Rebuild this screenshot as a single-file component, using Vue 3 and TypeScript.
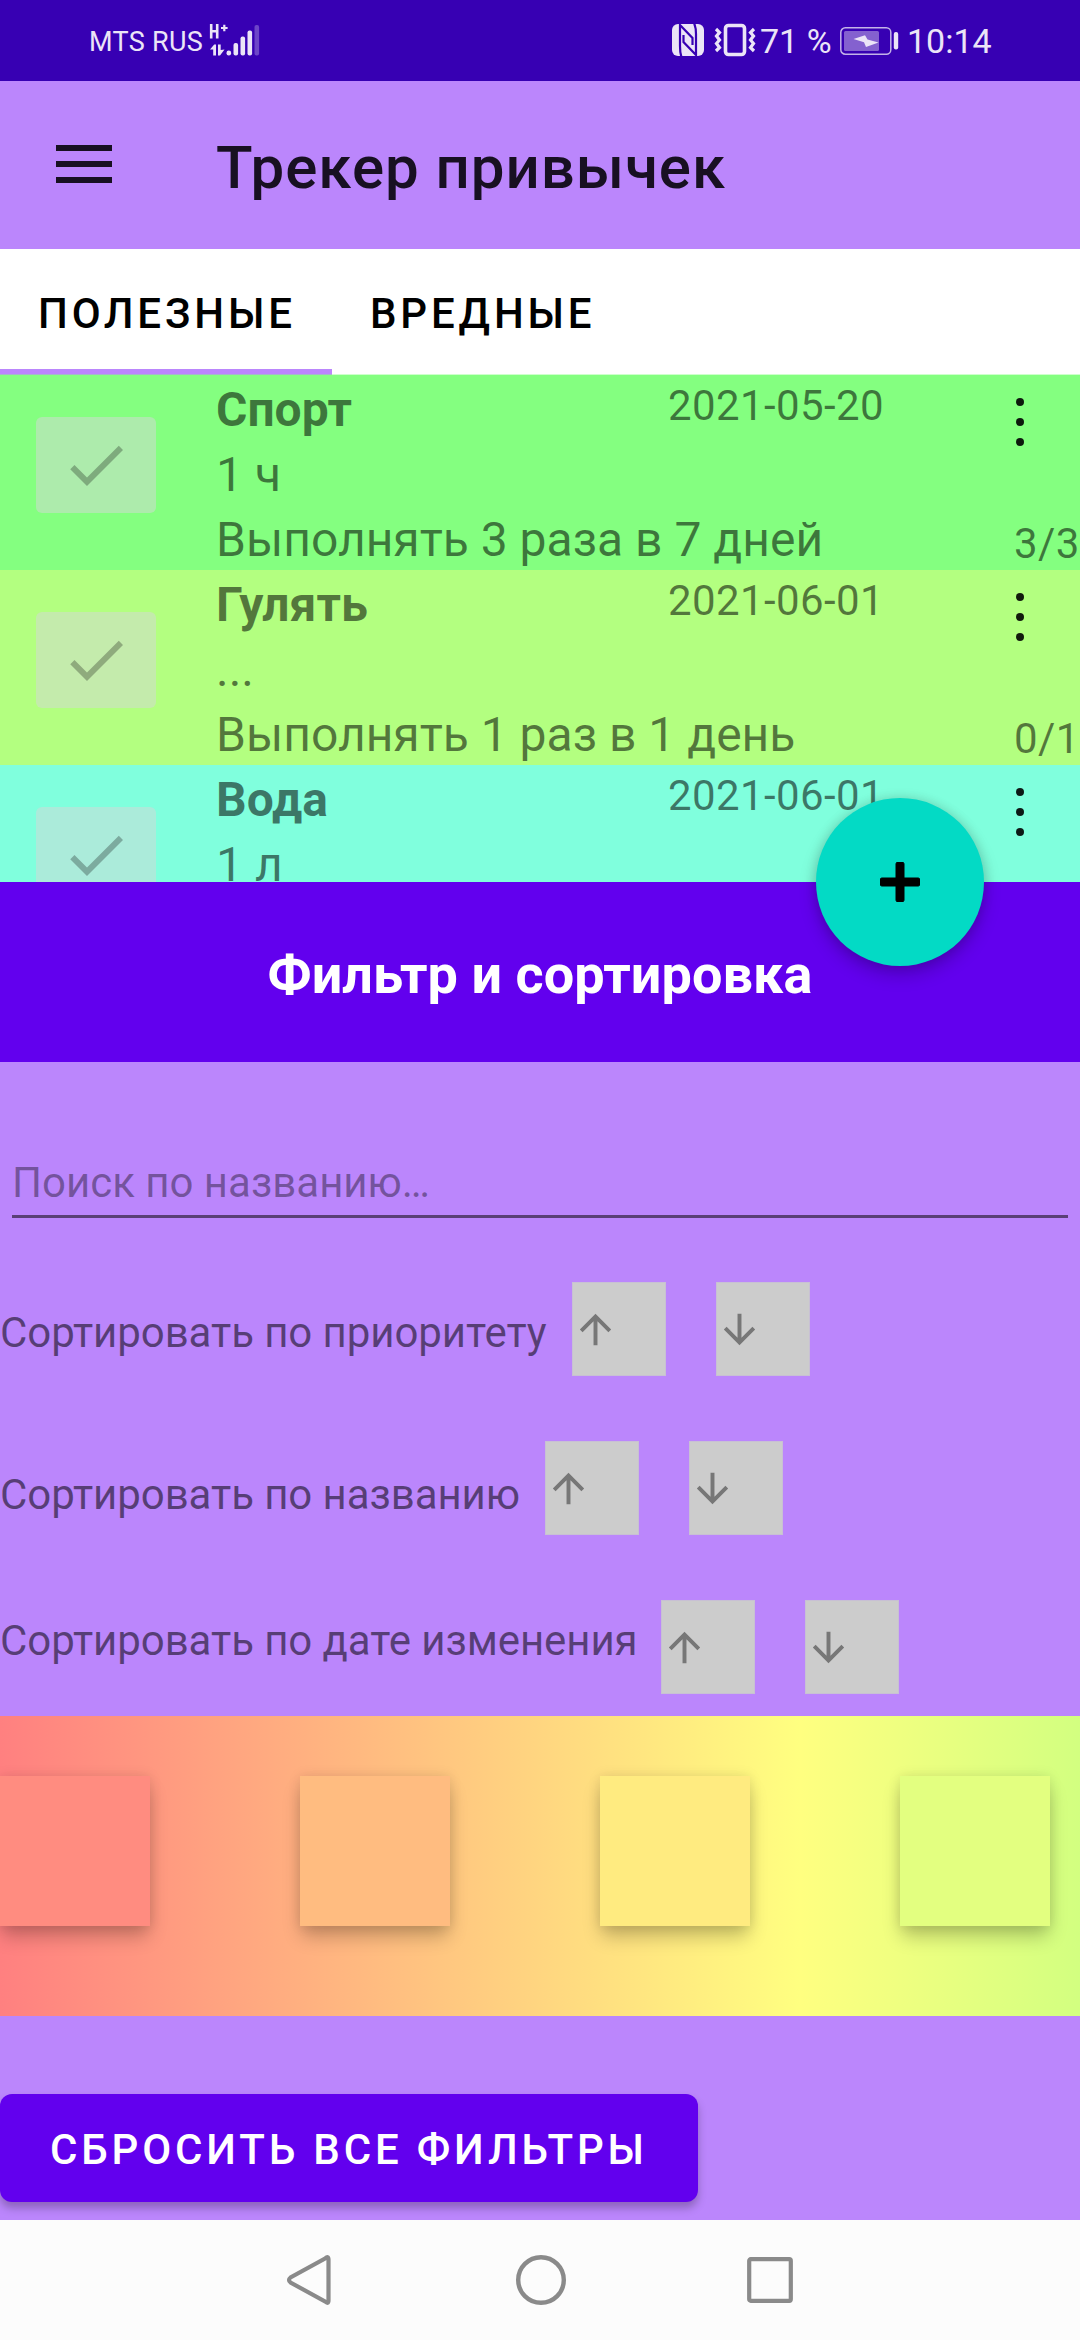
<script setup lang="ts">
interface Habit {
  name: string
  amount: string
  schedule?: string
  date: string
  progress?: string
  color: string
}

interface SortOption {
  label: string
  width: number
  padTop: number
  padBottom: number
}

const habits: Habit[] = [
  { name: 'Спорт', amount: '1 ч', schedule: 'Выполнять 3 раза в 7 дней', date: '2021-05-20', progress: '3/3', color: '#84ff80' },
  { name: 'Гулять', amount: '...', schedule: 'Выполнять 1 раз в 1 день', date: '2021-06-01', progress: '0/1', color: '#b3ff80' },
  { name: 'Вода', amount: '1 л', date: '2021-06-01', color: '#80ffdd' },
]

const sortOptions: SortOption[] = [
  { label: 'Сортировать по приоритету', width: 547, padTop: 8, padBottom: 0 },
  { label: 'Сортировать по названию', width: 520, padTop: 13, padBottom: 0 },
  { label: 'Сортировать по дате изменения', width: 636, padTop: 0, padBottom: 12 },
]

const swatches: string[] = ['#ff8c80', '#ffbc80', '#ffeb80', '#e3ff80']
</script>

<template>
  <div class="screen">
    <header class="status">
      <span class="carrier">MTS RUS</span>
      <svg class="signal" width="52" height="34" viewBox="0 0 52 34">
        <g fill="none" stroke="#ebe4f7" stroke-width="2.6">
          <path d="M2.2 1V15.500M8.200 1V15.500M2.200 8.300H8.200" />
          <path d="M12 5H18.600M15.300 1.800V8.200" stroke-width="2.200" />
        </g>
        <path d="M1 26.500L5.200 21.500H7V32.500H4.200V26.500ZM9 21.500H11.700V27L15.500 26.500L11 32.500H9Z" fill="#ebe4f7" />
        <g fill="#ebe4f7">
          <rect x="17.500" y="27.500" width="4.600" height="5" rx="2.200" />
          <rect x="24.500" y="20" width="4.600" height="12.500" rx="2" />
          <rect x="31.500" y="13.500" width="4.600" height="19" rx="2" />
          <rect x="38.500" y="7.500" width="4.600" height="25" rx="2" />
          <rect x="45.500" y="2" width="4.600" height="30.500" rx="2" opacity=".3" />
        </g>
      </svg>
      <span class="spacer"></span>
      <svg class="nfc" width="32" height="32" viewBox="0 0 32 32">
        <rect width="32" height="32" rx="6" fill="#ebe4f7" />
        <g fill="none" stroke="#3700b3" stroke-width="2.200">
          <path d="M9.500 33C8 29 8 26 8 22V1L20.500 14V21" />
          <path d="M22 -1C23.800 3 24 6 24 10V31L11.500 18V11" />
        </g>
      </svg>
      <svg class="vibrate" width="42" height="34" viewBox="0 0 42 34">
        <rect x="11.500" y="2.500" width="19" height="29" rx="3" fill="none" stroke="#ebe4f7" stroke-width="3.600" />
        <path d="M2 6L5.500 9.500L2.500 13L5.500 17L2.500 20.500L5.500 24.500L2 28M40 6L36.500 9.500L39.500 13L36.500 17L39.500 20.500L36.500 24.500L40 28" fill="none" stroke="#ebe4f7" stroke-width="3.200" />
      </svg>
      <span class="percent">71 %</span>
      <svg class="battery" width="60" height="28" viewBox="0 0 60 28">
        <rect x=".800" y=".800" width="50" height="26.400" rx="4.500" fill="none" stroke="#c3b2e8" stroke-width="1.500" />
        <rect x="4" y="4" width="35" height="20" rx="1.500" fill="#8461cf" />
        <path d="M13.500 12L25 8.200L27.500 12.600L38.500 15.500L26 20L24 15.300Z" fill="#ebe4f7" />
        <rect x="53.800" y="5" width="4.400" height="17.500" rx="2" fill="#ebe4f7" />
      </svg>
      <span class="clock">10:14</span>
    </header>

    <div class="appbar">
      <svg class="burger" width="56" height="38" viewBox="0 0 56 38">
        <path d="M0 0H56V6H0ZM0 16H56V22H0ZM0 32H56V38H0Z" fill="#181022" />
      </svg>
      <h1 class="title">Трекер привычек</h1>
    </div>

    <nav class="tabs">
      <span class="tab active">ПОЛЕЗНЫЕ</span>
      <span class="tab">ВРЕДНЫЕ</span>
    </nav>

    <main class="list">
      <article v-for="habit in habits" :key="habit.name" class="habit" :style="{ backgroundColor: habit.color }">
        <div class="check">
          <svg width="72" height="72" viewBox="0 0 24 24">
            <path d="M9 16.170L4.830 12l-1.420 1.410L9 19 21 7l-1.410-1.410z" fill="#000" fill-opacity=".27" />
          </svg>
        </div>
        <strong class="name">{{ habit.name }}</strong>
        <span class="date">{{ habit.date }}</span>
        <svg class="more" width="10" height="50" viewBox="0 0 10 50">
          <g fill="#000" fill-opacity=".9">
            <circle cx="5" cy="5" r="4" />
            <circle cx="5" cy="25" r="4" />
            <circle cx="5" cy="45" r="4" />
          </g>
        </svg>
        <span class="amount">{{ habit.amount }}</span>
        <span v-if="habit.schedule" class="schedule">{{ habit.schedule }}</span>
        <span v-if="habit.progress" class="progress">{{ habit.progress }}</span>
      </article>
    </main>

    <section class="sheet">
      <h2 class="sheet-title">Фильтр и сортировка</h2>
      <button class="fab" type="button">
        <svg width="40" height="40" viewBox="0 0 40 40">
          <path d="M20 1.200V38.800M1.200 20H38.800" stroke="#000" stroke-width="9" />
          <path d="M17 1H23M17 39H23M1 17V23M39 17V23" stroke="#000" stroke-width="2" stroke-linecap="round" />
        </svg>
      </button>

      <div class="search">Поиск по названию…</div>

      <div class="sorts">
        <div v-for="option in sortOptions" :key="option.label" class="sort">
          <span
            class="sort-label"
            :style="{ width: option.width + 'px', paddingTop: option.padTop + 'px', paddingBottom: option.padBottom + 'px' }"
          >{{ option.label }}</span>
          <div class="sort-button">
            <svg width="47" height="47" viewBox="0 0 24 24">
              <path d="M4 12l1.410 1.410L11 7.830V20h2V7.830l5.580 5.590L20 12l-8-8-8 8z" fill="#777" />
            </svg>
          </div>
          <div class="sort-button">
            <svg width="47" height="47" viewBox="0 0 24 24">
              <path d="M20 12l-1.410-1.410L13 16.170V4h-2v12.170l-5.580-5.590L4 12l8 8 8-8z" fill="#777" />
            </svg>
          </div>
        </div>
      </div>

      <div class="palette">
        <div v-for="color in swatches" :key="color" class="swatch" :style="{ backgroundColor: color }"></div>
      </div>

      <button class="reset" type="button">СБРОСИТЬ ВСЕ ФИЛЬТРЫ</button>
    </section>

    <footer class="navbar">
      <svg width="50" height="54" viewBox="0 0 50 54">
        <path d="M43.500 6.500V47.500Q43.500 51.500 40 48.500L5.500 29.500Q2.500 27 5.500 24.500L40 5.500Q43.500 2.500 43.500 6.500Z" fill="none" stroke="#8a8a8a" stroke-width="4.200" />
      </svg>
      <svg width="54" height="54" viewBox="0 0 54 54">
        <circle cx="27" cy="27" r="22.800" fill="none" stroke="#8a8a8a" stroke-width="4.400" />
      </svg>
      <svg class="recent" width="50" height="54" viewBox="0 0 50 54">
        <rect x="4.200" y="6.200" width="41.600" height="41.600" rx="1.500" fill="none" stroke="#8a8a8a" stroke-width="4.200" />
      </svg>
    </footer>
  </div>
</template>

<style>
body {
  margin: 0;
}
</style>

<style scoped>
.screen {
  width: 1080px;
  height: 2340px;
  overflow: hidden;
  display: flex;
  flex-direction: column;
  font-family: Roboto, "Noto Sans", sans-serif;
  background: #bb86fc;
}
h1, h2 {
  margin: 0;
}
svg {
  display: block;
  flex: none;
}
button {
  border: 0;
  padding: 0;
  font-family: inherit;
}
.status {
  flex: 0 0 81px;
  display: flex;
  align-items: center;
  box-sizing: border-box;
  padding: 0 87px 2px 89px;
  background: #3700b3;
  color: #ebe4f7;
  white-space: nowrap;
}
.carrier {
  width: 120px;
  font-size: 27px;
  letter-spacing: 0.3px;
  padding-top: 4px;
}
.spacer {
  flex: 1;
}
.nfc {
  margin-right: 10px;
}
.vibrate {
  margin-right: 4px;
}
.percent {
  font-size: 34px;
  width: 80px;
  padding-top: 3px;
}
.battery {
  margin-top: 3px;
  margin-right: 7px;
}
.clock {
  width: 86px;
  font-size: 34px;
  padding-top: 3px;
}
.appbar {
  flex: 0 0 168px;
  display: flex;
  align-items: center;
  box-sizing: border-box;
  padding-left: 56px;
  background: #bb86fc;
}
.burger {
  margin-bottom: 3px;
}
.title {
  margin-left: 104px;
  padding-top: 5px;
  font-size: 60px;
  font-weight: 500;
  line-height: 70px;
  letter-spacing: 0.95px;
  color: #181022;
}
.tabs {
  flex: 0 0 126px;
  display: flex;
  background: #fff;
}
.tab {
  box-sizing: border-box;
  height: 126px;
  padding: 0 36px 0 38px;
  font-size: 42px;
  font-weight: 500;
  line-height: 130px;
  letter-spacing: 3.85px;
  color: #000;
}
.tab.active {
  width: 332px;
  box-shadow: inset 0 -6px #bb86fc;
}
.list {
  flex: 0 0 507px;
  overflow: hidden;
  box-shadow: 0 -1px rgba(132, 255, 128, 0.4);
}
.habit {
  display: grid;
  grid-template-columns: 216px 452px 346px 66px;
  grid-template-rows: 65px 65px 65px;
  height: 195px;
  line-height: 65px;
  font-size: 48px;
  color: rgba(0, 0, 0, 0.54);
  white-space: nowrap;
}
.check {
  grid-column: 1;
  grid-row: 1 / 4;
  display: flex;
  align-items: center;
  justify-content: center;
  width: 120px;
  height: 96px;
  margin: 42px 0 0 36px;
  border-radius: 6px;
  background: rgba(214, 215, 215, 0.5);
}
.name {
  grid-column: 2;
  grid-row: 1;
  padding-top: 2px;
  font-weight: 700;
}
.date {
  grid-column: 3;
  grid-row: 1;
  font-size: 42px;
  line-height: 62px;
  letter-spacing: 0.4px;
}
.more {
  grid-column: 4;
  grid-row: 1 / 3;
  margin: 22px 0 0 1px;
}
.amount {
  grid-column: 2;
  grid-row: 2;
  padding-top: 2px;
}
.schedule {
  grid-column: 2 / 4;
  grid-row: 3;
  padding-top: 2px;
}
.progress {
  grid-column: 4;
  grid-row: 3;
  padding-top: 6px;
  font-size: 42px;
  letter-spacing: 0.4px;
}
.sheet {
  position: relative;
  flex: 1;
  display: flex;
  flex-direction: column;
  align-items: flex-start;
}
.sheet-title {
  width: 100%;
  height: 180px;
  box-sizing: border-box;
  padding-top: 3px;
  background: #6200ee;
  color: #fff;
  font-size: 54px;
  font-weight: 700;
  line-height: 180px;
  letter-spacing: 0.05px;
  text-align: center;
}
.fab {
  position: absolute;
  right: 96px;
  top: -84px;
  width: 168px;
  height: 168px;
  border-radius: 50%;
  background: #03dac5;
  display: flex;
  align-items: center;
  justify-content: center;
  box-shadow: 0 9px 18px rgba(0, 0, 0, 0.2), 0 0 12px rgba(0, 0, 0, 0.14);
}
.search {
  align-self: stretch;
  height: 57px;
  margin: 96px 12px 0;
  border-bottom: 3px solid #593f76;
  font-size: 42px;
  line-height: 50px;
  color: rgba(0, 0, 0, 0.38);
}
.sorts {
  display: flex;
  flex-direction: column;
  gap: 65px;
  margin-top: 64px;
}
.sort {
  display: flex;
  align-items: center;
  height: 94px;
}
.sort-label {
  flex: none;
  margin-right: 25px;
  font-size: 42px;
  line-height: 50px;
  letter-spacing: -0.08px;
  color: rgba(0, 0, 0, 0.54);
  white-space: nowrap;
}
.sort-button {
  display: flex;
  align-items: center;
  box-sizing: border-box;
  width: 94px;
  height: 94px;
  margin-right: 50px;
  background: #ccc;
  box-shadow: inset 0 0 0 1px #c8c0d4;
}
.palette {
  display: flex;
  gap: 150px;
  box-sizing: border-box;
  width: 100%;
  height: 300px;
  margin-top: 22px;
  padding-top: 60px;
  overflow: hidden;
  background: linear-gradient(90deg, #ff8080 0, #ffff80 800px, #80ff80 1600px);
}
.swatch {
  flex: none;
  width: 150px;
  height: 150px;
  box-shadow: 0 12px 18px -2px rgba(0, 0, 0, 0.24), 0 0 12px rgba(0, 0, 0, 0.1);
}
.reset {
  width: 698px;
  height: 108px;
  margin-top: 78px;
  padding: 2px 0 0 50px;
  border-radius: 12px;
  background: #6200ee;
  color: #fff;
  font-size: 42px;
  font-weight: 500;
  letter-spacing: 3.85px;
  text-align: left;
  white-space: nowrap;
  box-shadow: 0 6px 9px rgba(0, 0, 0, 0.25);
}
.navbar {
  flex: 0 0 120px;
  display: flex;
  align-items: center;
  justify-content: center;
  gap: 179px;
  background: #fcfcfc;
}
.recent {
  margin-left: -2px;
}
</style>
